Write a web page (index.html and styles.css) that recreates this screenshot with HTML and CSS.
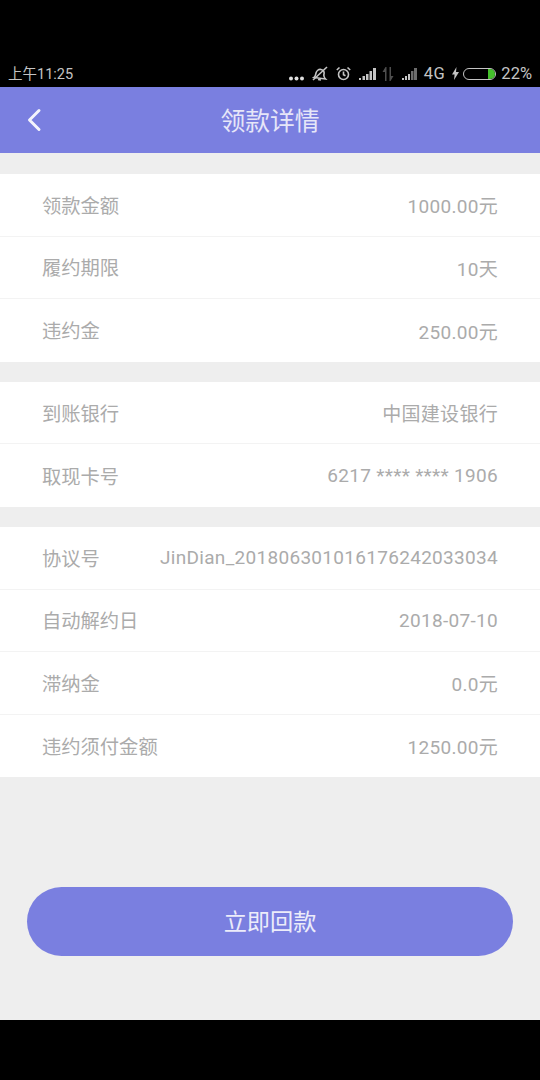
FILE: index.html
```html
<!DOCTYPE html>
<html lang="zh-CN">
<head>
    <meta charset="UTF-8">
    <meta name="viewport" content="width=device-width, initial-scale=1.0">
    <title>领款详情</title>
    <link rel="stylesheet" href="styles.css">
</head>
<body>
    <div class="phone">
        <div class="status-bar">
            <span class="time">上午11:25</span>
            <div class="status-icons">
                <svg class="dots" width="15" height="5" viewBox="0 0 15 5"><circle cx="2" cy="2.500" r="2"/><circle cx="7.500" cy="2.500" r="2"/><circle cx="13" cy="2.500" r="2"/></svg>
                <svg class="icon-mute" width="16" height="15" viewBox="0 0 16 15" fill="none"><path d="M2 11.500c1.500-1 1.500-2.500 2-4.500s2.500-4 5-3.500 3.500 2.500 3 4.500 0 3.500 1.500 5z"/><path d="M6 13.500l3 .5"/><path d="M1 14L15 1"/></svg>
                <svg class="icon-alarm" width="15" height="15" viewBox="0 0 15 15" fill="none"><circle cx="7.500" cy="8.500" r="5"/><path d="M7.500 5.500v3.200l2 1.100"/><path d="M.8 4L3.500 1.500M14.200 4L11.500 1.500"/></svg>
                <svg class="signal" width="17" height="12" viewBox="0 0 17 12"><rect x="0" y="10" width="2" height="2"/><rect x="3.500" y="8" width="2.500" height="4"/><rect x="7" y="6" width="2.500" height="6"/><rect x="10.500" y="3" width="2.500" height="9"/><rect x="14" y="0" width="3" height="12"/></svg>
                <svg class="arrows" width="12" height="14" viewBox="0 0 12 14"><path d="M3 14V5H0.500L3.500 0 4.500 0V14zM7.500 0H9V9h2.500L8.500 14H7.500z"/></svg>
                <svg class="signal signal-sim2" width="15" height="12" viewBox="0 0 15 12"><rect x="0" y="10" width="2" height="2"/><rect x="3" y="8" width="2" height="4"/><rect x="6" y="6" width="2" height="6"/><rect class="dim" x="9" y="3" width="2.500" height="9"/><rect class="dim" x="12" y="0" width="3" height="12"/></svg>
                <span class="net">4G</span>
                <svg class="bolt" width="7" height="13" viewBox="0 0 7 13"><path d="M4.500 0L0 7.500h2.600L2 13 7 5H4z"/></svg>
                <div class="battery"><div class="battery-level"></div></div>
                <span class="percent">22%</span>
            </div>
        </div>

        <header class="title-bar">
            <svg class="back" width="16" height="24" viewBox="0 0 16 24" fill="none"><path d="M13 2.500L3.500 12l9.500 9.500"/></svg>
            <h1>领款详情</h1>
        </header>

        <main class="content">
            <section class="group">
                <div class="row"><span class="label">领款金额</span><span class="value">1000.00元</span></div>
                <div class="row"><span class="label">履约期限</span><span class="value">10天</span></div>
                <div class="row"><span class="label">违约金</span><span class="value">250.00元</span></div>
            </section>
            <section class="group">
                <div class="row"><span class="label">到账银行</span><span class="value">中国建设银行</span></div>
                <div class="row"><span class="label">取现卡号</span><span class="value">6217 **** **** 1906</span></div>
            </section>
            <section class="group">
                <div class="row"><span class="label">协议号</span><span class="value">JinDian_201806301016176242033034</span></div>
                <div class="row"><span class="label">自动解约日</span><span class="value">2018-07-10</span></div>
                <div class="row"><span class="label">滞纳金</span><span class="value">0.0元</span></div>
                <div class="row"><span class="label">违约须付金额</span><span class="value">1250.00元</span></div>
            </section>
            <button class="repay">立即回款</button>
        </main>
    </div>
</body>
</html>
```

FILE: styles.css
```css
* { box-sizing: border-box; }

body {
    margin: 0;
    background: #000;
    font-family: Roboto, "Noto Sans CJK SC", sans-serif;
}

.phone {
    width: 540px;
    height: 1080px;
    padding: 60px 0;
    display: flex;
    flex-direction: column;
}

/* Status bar */

.status-bar {
    height: 27px;
    padding: 0 8px;
    display: flex;
    justify-content: space-between;
    align-items: center;
    color: #c4c4c4;
    font-size: 14.500px;
}

.time { margin-top: -2px; }

.status-icons {
    display: flex;
    align-items: center;
}

.status-icons svg { flex: none; fill: #c4c4c4; }

.dots { margin-right: 8px; margin-top: 9px; fill: #e0e0e0 !important; }

.icon-mute,
.icon-alarm { fill: none !important; stroke: #c4c4c4; stroke-width: 1.600; }

.icon-mute { margin-right: 8px; }
.icon-alarm { margin-right: 8px; }

.signal { margin-right: 6px; }

.signal-sim2 { margin-right: 7px; }

.dim { opacity: .55; }

.arrows { margin-right: 8px; opacity: .4; }

.net { margin-right: 7px; font-size: 16.500px; letter-spacing: .5px; }

.bolt { margin-right: 4px; }

.battery {
    width: 33px;
    height: 12px;
    border: 1.500px solid #c4c4c4;
    border-radius: 6px;
    margin-right: 5px;
    display: flex;
    justify-content: flex-end;
    overflow: hidden;
}

.battery-level {
    width: 7px;
    background: #45c02c;
}

.percent { font-size: 16.500px; }

/* Title bar */

.title-bar {
    height: 66px;
    flex: none;
    position: relative;
    display: flex;
    align-items: center;
    justify-content: center;
    background: #7a7fe0;
}

.title-bar h1 {
    margin: -2px 0 0;
    font-size: 24.800px;
    font-weight: 400;
    color: #e6e6f8;
}

.back {
    position: absolute;
    left: 26px;
    top: 21px;
    stroke: #f4f4fc;
    stroke-width: 3;
    stroke-linecap: round;
    stroke-linejoin: round;
}

/* Details */

.content {
    flex: 1;
    padding-top: 21px;
    background: #eeeeee;
}

.group {
    margin-bottom: 20.300px;
    background: #fff;
}

.row {
    height: 62.500px;
    padding: 0 42px;
    display: flex;
    justify-content: space-between;
    align-items: center;
    font-size: 19.300px;
    color: #ababab;
    border-bottom: 1px solid #f3f3f3;
}

.row:last-child { border-bottom: 0; }

.value {
    font-size: 19px;
    letter-spacing: .3px;
}

.repay {
    display: block;
    width: 486px;
    height: 69px;
    margin: 110px auto 0;
    padding: 0 0 4px;
    border: 0;
    border-radius: 35px;
    background: #7a7fe0;
    color: #ececfa;
    font: 400 23.200px Roboto, "Noto Sans CJK SC", sans-serif;
}
```
